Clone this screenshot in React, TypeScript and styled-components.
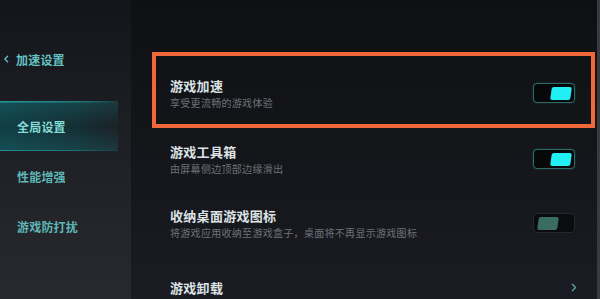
import React from 'react';
import styled, { createGlobalStyle } from 'styled-components';

const GlobalStyle = createGlobalStyle`
  html, body {
    margin: 0;
    padding: 0;
    background: #111216;
  }
  body {
    font-family: "Noto Sans CJK SC", "Noto Sans", sans-serif;
  }
`;

const Page = styled.div`
  display: flex;
  width: 600px;
  height: 299px;
  overflow: hidden;
`;

// Sidebar
const Sidebar = styled.aside`
  width: 131px;
  flex-shrink: 0;
  padding-top: 34px;
  box-sizing: border-box;
  background: linear-gradient(180deg, #14151a 0%, #1b1d22 35%, #23252b 75%, #27292f 100%);
`;

const Header = styled.div`
  display: flex;
  align-items: center;
  height: 50px;
  padding-left: 3px;
  gap: 7px;
  color: #64c2c2;
  font-size: 12px;
  font-weight: 700;
  letter-spacing: 0.2px;
`;

const Nav = styled.nav`
  display: flex;
  flex-direction: column;
  margin-top: 17px;
`;

const NavItem = styled.div<{ $active?: boolean }>`
  display: flex;
  align-items: center;
  height: 50px;
  width: 118px;
  padding-left: 17px;
  box-sizing: border-box;
  font-size: 12px;
  font-weight: 700;
  letter-spacing: 0.2px;
  color: ${(p) => (p.$active ? '#86dcd6' : '#5fb6b6')};
  background: ${(p) =>
    p.$active
      ? `linear-gradient(90deg, rgba(40,175,178,0.75) 0%, rgba(40,175,178,0.5) 65%, rgba(40,175,178,0) 100%) top / 100% 1.5px no-repeat,
         linear-gradient(90deg, rgba(40,175,178,0.65) 0%, rgba(40,175,178,0.4) 65%, rgba(40,175,178,0) 100%) bottom / 100% 1.5px no-repeat,
         linear-gradient(180deg, rgba(25,115,120,0.35) 0%, rgba(10,50,58,0.1) 50%, rgba(25,115,120,0.3) 100%),
         linear-gradient(90deg, rgba(12,78,86,0.7) 0%, rgba(12,66,74,0.4) 65%, rgba(12,60,70,0) 100%)`
      : 'none'};
`;

// Main panel
const Main = styled.main`
  flex: 1;
  display: flex;
  flex-direction: column;
  padding: 52px 2px 0 21px;
  background: linear-gradient(180deg, #0f1014 0%, #141519 45%, #1b1c23 100%);
  border-right: 3px solid #3a3b41;
`;

const Row = styled.div<{ $highlight?: boolean; $h: number }>`
  display: flex;
  align-items: center;
  justify-content: space-between;
  flex-shrink: 0;
  height: ${(p) => p.$h}px;
  box-sizing: border-box;
  border: ${(p) => (p.$highlight ? '4px solid #f0683a' : 'none')};
  padding: ${(p) => (p.$highlight ? '7px 16px 0 14px' : '0 20px 0 18px')};
`;

const Texts = styled.div`
  display: flex;
  flex-direction: column;
`;

const Title = styled.div`
  font-size: 13px;
  line-height: 16px;
  font-weight: 700;
  color: #dde2e5;
  letter-spacing: 0.3px;
`;

const Subtitle = styled.div`
  margin-top: 1px;
  font-size: 10px;
  line-height: 15px;
  color: #6e727a;
  letter-spacing: 0.3px;
`;

const Track = styled.div<{ $on: boolean }>`
  display: flex;
  align-items: center;
  justify-content: ${(p) => (p.$on ? 'flex-end' : 'flex-start')};
  width: 42px;
  height: 20px;
  margin-top: -1px;
  padding: 0 3px 0 4px;
  box-sizing: border-box;
  border-radius: 4px;
  background: ${(p) => (p.$on ? '#06080a' : '#0a0c0f')};
  border: 1.5px solid ${(p) => (p.$on ? '#2c6d6c' : '#1e2a2c')};
  box-shadow: ${(p) => (p.$on ? '0 0 2px rgba(60,160,160,0.35)' : 'none')};
`;

const Knob = styled.div<{ $on: boolean }>`
  width: 20px;
  height: 13px;
  border-radius: 2px;
  transform: skewX(-8deg);
  background: ${(p) => (p.$on ? '#22eff3' : '#3b6c63')};
`;

const Toggle = ({ on }: { on: boolean }) => (
  <Track $on={on}>
    <Knob $on={on} />
  </Track>
);

const Chevron = ({ color, size = 8 }: { color: string; size?: number }) => (
  <svg width={size * 0.7} height={size} viewBox="0 0 7 10" fill="none">
    <path d="M1.5 1.5 L5 5 L1.5 8.5" stroke={color} strokeWidth="1.6" strokeLinecap="round" strokeLinejoin="round" />
  </svg>
);

const BackChevron = () => (
  <svg width="6" height="8" viewBox="0 0 7 10" fill="none">
    <path d="M5.5 1.5 L2 5 L5.5 8.5" stroke="#64c2c2" strokeWidth="1.6" strokeLinecap="round" strokeLinejoin="round" />
  </svg>
);

const ChevronWrap = styled.div`
  display: flex;
  margin-right: -2px;
`;

const settings = [
  { title: '游戏加速', sub: '享受更流畅的游戏体验', on: true, h: 76, highlight: true },
  { title: '游戏工具箱', sub: '由屏幕侧边顶部边缘滑出', on: true, h: 63 },
  { title: '收纳桌面游戏图标', sub: '将游戏应用收纳至游戏盒子，桌面将不再显示游戏图标', on: false, h: 65 },
];

export default function App() {
  return (
    <>
      <GlobalStyle />
      <Page>
        <Sidebar>
          <Header>
            <BackChevron />
            <span>加速设置</span>
          </Header>
          <Nav>
            <NavItem $active>全局设置</NavItem>
            <NavItem>性能增强</NavItem>
            <NavItem>游戏防打扰</NavItem>
          </Nav>
        </Sidebar>
        <Main>
          {settings.map((s) => (
            <Row key={s.title} $highlight={s.highlight} $h={s.h}>
              <Texts>
                <Title>{s.title}</Title>
                <Subtitle>{s.sub}</Subtitle>
              </Texts>
              <Toggle on={s.on} />
            </Row>
          ))}
          <Row $h={63}>
            <Title>游戏卸载</Title>
            <ChevronWrap>
              <Chevron color="#5a9e9e" size={9} />
            </ChevronWrap>
          </Row>
        </Main>
      </Page>
    </>
  );
}
